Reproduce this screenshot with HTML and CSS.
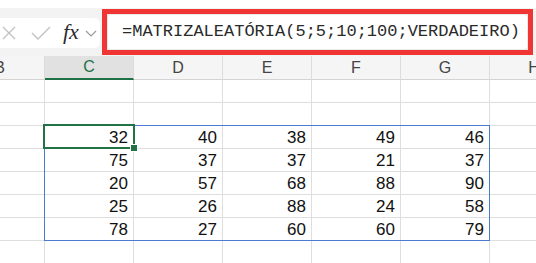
FILE: index.html
```html
<!DOCTYPE html>
<html lang="pt">
<head>
    <meta charset="UTF-8">
    <title>MATRIZALEATÓRIA</title>
    <link rel="stylesheet" href="styles.css">
</head>
<body>
    <div class="sheet">
        <div class="top-strip"></div>

        <div class="formula-bar">
            <div class="fx-box">
                <svg class="icon" width="14" height="14" viewBox="0 0 14 14">
                    <path d="M1 1 L13 13 M13 1 L1 13" stroke="#c2c2c2" stroke-width="1.4" fill="none"/>
                </svg>
                <svg class="icon check" width="20" height="14" viewBox="0 0 20 14">
                    <path d="M1 7 L7 13 L19 1" stroke="#c2c2c2" stroke-width="1.4" fill="none"/>
                </svg>
                <span class="fx">fx</span>
                <svg class="icon chevron" width="12" height="7" viewBox="0 0 12 7">
                    <path d="M1 1 L6 6 L11 1" stroke="#9a9a9a" stroke-width="1.2" fill="none"/>
                </svg>
            </div>
            <div class="highlight">
                <div class="formula">=MATRIZALEATÓRIA(5;5;10;100;VERDADEIRO)</div>
            </div>
        </div>

        <div class="grid-wrap">
            <div class="grid" id="grid">
                <div class="head first">B</div>
                <div class="head active">C</div>
                <div class="head">D</div>
                <div class="head">E</div>
                <div class="head">F</div>
                <div class="head">G</div>
                <div class="head">H</div>
            </div>
            <!-- selection range and active cell, drawn over the grid -->
            <div class="range"></div>
            <div class="active-cell"><span class="handle"></span></div>
        </div>
    </div>

    <script>
        // values returned by the formula, row by row
        var values = [
            [32, 40, 38, 49, 46],
            [75, 37, 37, 21, 37],
            [20, 57, 68, 88, 90],
            [25, 26, 88, 24, 58],
            [78, 27, 60, 60, 79]
        ];

        var grid = document.getElementById('grid');

        function addRow(cells) {
            for (var i = 0; i < 7; i++) {
                var cell = document.createElement('div');
                cell.className = 'cell';
                if (cells && i > 0 && i < 6) {
                    cell.textContent = cells[i - 1];
                }
                grid.appendChild(cell);
            }
        }

        addRow(null);
        addRow(null);
        for (var r = 0; r < values.length; r++) {
            addRow(values[r]);
        }
        addRow(null);
    </script>
</body>
</html>
```

FILE: styles.css
```css
body {
    margin: 0;
    padding: 0;
    background-color: #fff;
    font-family: "Liberation Sans", Arial, sans-serif;
}

.sheet {
    width: 536px;
    height: 263px;
    overflow: hidden;
}

.top-strip {
    height: 8px;
    background-color: #fff;
}

.formula-bar {
    height: 48px;
    background-color: #f3f3f3;
    display: flex;
    align-items: flex-start;
}

.fx-box {
    width: 110px;
    height: 30px;
    margin-top: 10px;
    margin-left: -10px;
    background-color: #fff;
    border-radius: 6px;
    display: flex;
    align-items: center;
    padding-left: 12px;
    box-sizing: border-box;
}

.icon {
    display: block;
}

.check {
    margin-left: 15px;
}

.fx {
    font-family: "Liberation Serif", "Times New Roman", serif;
    font-style: italic;
    font-size: 22px;
    color: #2b2b2b;
    margin-left: 12px;
    margin-top: -3px;
}

.chevron {
    margin-left: 6px;
}

.highlight {
    margin-left: 2px;
    margin-top: 1px;
    width: 431px;
    height: 46px;
    box-sizing: border-box;
    border: 5px solid #f03535;
    padding: 1px;
    background-color: #e9e9e9;
}

.formula {
    height: 100%;
    background-color: #fff;
    border-radius: 3px;
    font-family: "Liberation Mono", "Courier New", monospace;
    font-size: 17px;
    color: #2a2a2a;
    line-height: 34px;
    padding-left: 14px;
    white-space: nowrap;
}

.grid-wrap {
    position: relative;
}

.grid {
    display: grid;
    grid-template-columns: 45px repeat(6, 89px);
    grid-template-rows: 24px;
    grid-auto-rows: 23px;
}

.head {
    background-color: #f5f5f5;
    border-right: 1px solid #dcdcdc;
    border-bottom: 1px solid #d4d4d4;
    box-sizing: border-box;
    text-align: center;
    font-size: 16px;
    line-height: 23px;
    color: #444;
    overflow: hidden;
}

.head.first {
    text-indent: -45px;
}

.head.active {
    background-color: #e1e1e1;
    color: #1e7145;
    border-bottom: 2px solid #1e7145;
    line-height: 22px;
}

.cell {
    border-right: 1px solid #dedede;
    border-bottom: 1px solid #dedede;
    box-sizing: border-box;
    text-align: right;
    padding-right: 5px;
    font-size: 17px;
    line-height: 23px;
    color: #111;
}

.range {
    position: absolute;
    left: 44px;
    top: 69px;
    width: 446px;
    height: 116px;
    box-sizing: border-box;
    border: 1px solid #4a7bd0;
}

.active-cell {
    position: absolute;
    left: 43px;
    top: 68px;
    width: 92px;
    height: 25px;
    box-sizing: border-box;
    border: 2px solid #217346;
}

.handle {
    position: absolute;
    right: -5px;
    bottom: -5px;
    width: 6px;
    height: 6px;
    background-color: #217346;
    border: 1px solid #fff;
}
```
